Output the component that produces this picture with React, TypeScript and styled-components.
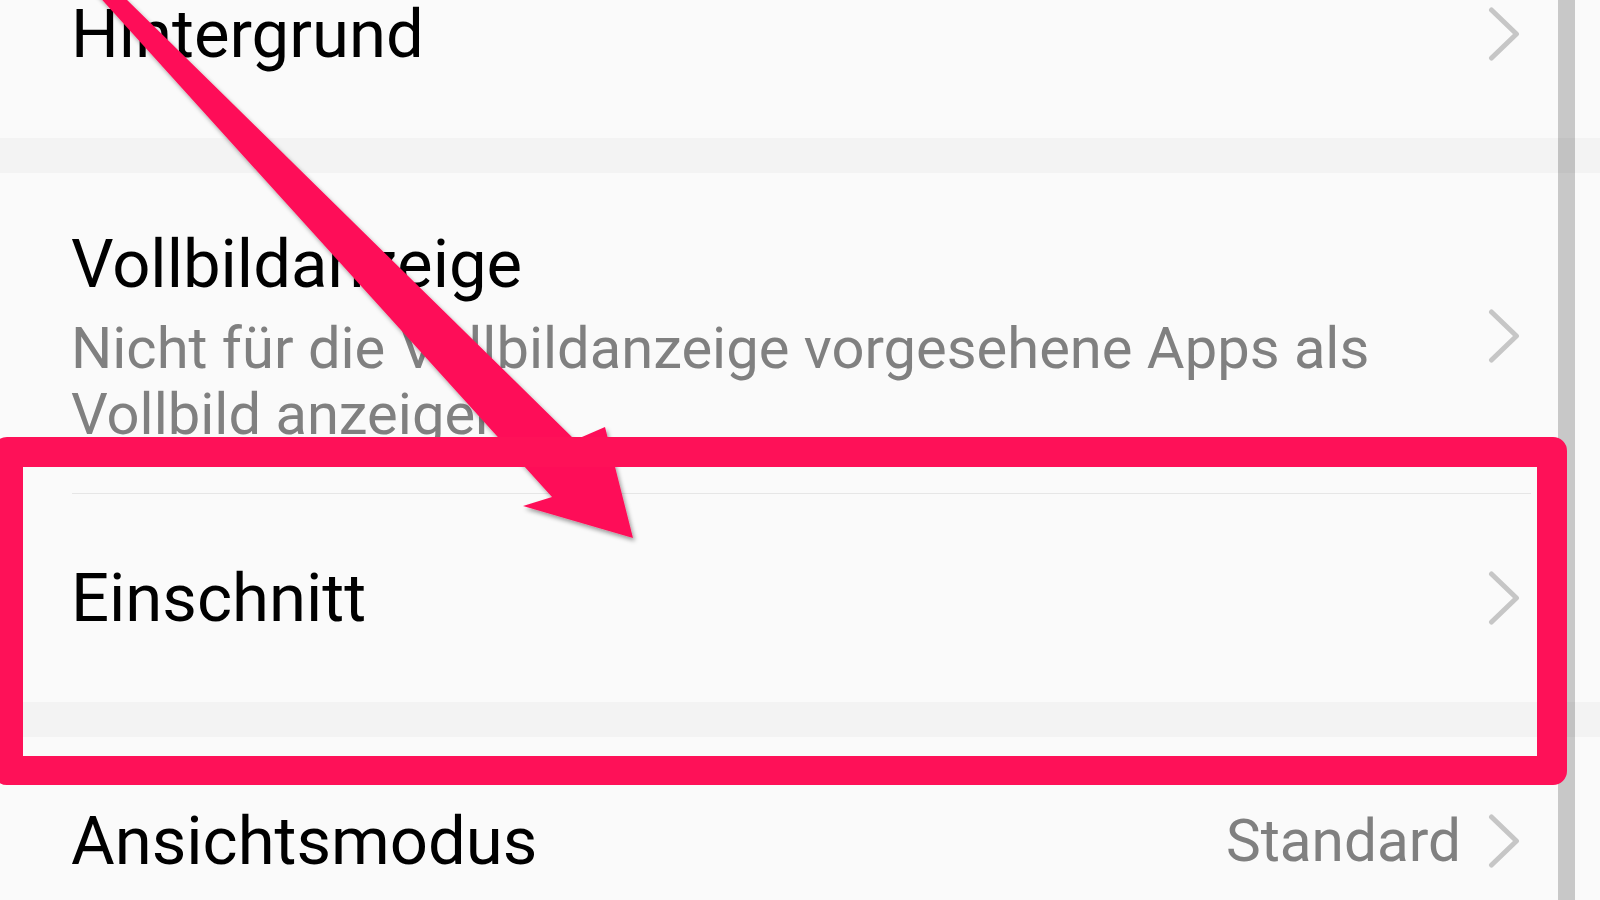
import React from "react";
import styled, { createGlobalStyle } from "styled-components";

const GlobalStyle = createGlobalStyle`
  html, body {
    margin: 0;
    padding: 0;
    background: #fafafa;
  }
  body {
    font-family: Roboto, "Noto Sans", "Liberation Sans", sans-serif;
    -webkit-font-smoothing: antialiased;
  }
`;

const ACCENT = "#fe1158";

const Screen = styled.div`
  position: relative;
  width: 1600px;
  height: 900px;
  overflow: hidden;
  background: #fafafa;
`;

const List = styled.div`
  display: flex;
  flex-direction: column;
  margin-top: -70px;
`;

const Row = styled.div<{ $height: number; $padTop?: number; $padBottom?: number }>`
  box-sizing: border-box;
  display: flex;
  align-items: center;
  height: ${(p) => p.$height}px;
  padding: ${(p) => p.$padTop ?? 0}px 80px ${(p) => p.$padBottom ?? 0}px 71px;
`;

const TextBlock = styled.div`
  flex: 1;
  min-width: 0;
  display: flex;
  flex-direction: column;
`;

const Title = styled.div`
  font-size: 67px;
  line-height: 80px;
  color: #000;
  white-space: nowrap;
`;

const Summary = styled.div`
  margin-top: 11px;
  font-size: 57.9px;
  line-height: 66px;
  color: #808080;
  padding-right: 30px;
`;

const Value = styled.div`
  font-size: 58.5px;
  line-height: 80px;
  color: #808080;
  margin-right: 27px;
  white-space: nowrap;
`;

const GroupGap = styled.div`
  height: 35px;
  background: #f3f3f3;
`;

const Divider = styled.div`
  height: 1px;
  margin: 0 69px 0 72px;
  background: #e6e6e6;
`;

const ChevronSvg = styled.svg`
  flex: none;
  width: 32px;
  height: 56px;
`;

const Scrollbar = styled.div`
  position: absolute;
  top: 0;
  bottom: 0;
  left: 1558px;
  width: 17px;
  background: rgba(0, 0, 0, 0.2);
  pointer-events: none;
`;

const Highlight = styled.div`
  position: absolute;
  left: -7px;
  top: 437px;
  width: 1574px;
  height: 348px;
  box-sizing: border-box;
  border: 30px solid ${ACCENT};
  border-bottom-width: 29px;
  border-radius: 14px;
  pointer-events: none;
`;

const ArrowLayer = styled.svg`
  position: absolute;
  left: 0;
  top: 0;
  width: 1600px;
  height: 900px;
  pointer-events: none;
  overflow: visible;
`;

const Chevron = () => (
  <ChevronSvg viewBox="0 0 32 56">
    <path
      d="M3.5 4 L28.5 28 L3.5 52"
      fill="none"
      stroke="#c6c6c6"
      strokeWidth="5"
      strokeLinecap="round"
      strokeLinejoin="round"
    />
  </ChevronSvg>
);

export default function App() {
  return (
    <>
      <GlobalStyle />
      <Screen>
        <List>
          <Row $height={208}>
            <TextBlock>
              <Title>Hintergrund</Title>
            </TextBlock>
            <Chevron />
          </Row>
          <GroupGap />
          <Row $height={320} $padTop={51} $padBottom={46}>
            <TextBlock>
              <Title>Vollbildanzeige</Title>
              <Summary>
                Nicht für die Vollbildanzeige vorgesehene Apps als Vollbild anzeigen
              </Summary>
            </TextBlock>
            <Chevron />
          </Row>
          <Divider />
          <Row $height={208}>
            <TextBlock>
              <Title>Einschnitt</Title>
            </TextBlock>
            <Chevron />
          </Row>
          <GroupGap />
          <Row $height={208}>
            <TextBlock>
              <Title>Ansichtsmodus</Title>
            </TextBlock>
            <Value>Standard</Value>
            <Chevron />
          </Row>
        </List>

        <Scrollbar />

        {/* callout arrow pointing at the "Einschnitt" entry */}
        <ArrowLayer viewBox="0 0 1600 900">
          <defs>
            <filter id="arrowShadow" x="-20%" y="-20%" width="140%" height="140%">
              <feDropShadow dx="2" dy="3" stdDeviation="2" floodColor="#000" floodOpacity="0.38" />
            </filter>
          </defs>
          <polygon
            points="48,-60 66,-60 575,440 605,427 633,538 523,506 552,497"
            fill={ACCENT}
            filter="url(#arrowShadow)"
          />
        </ArrowLayer>

        <Highlight />
      </Screen>
    </>
  );
}
